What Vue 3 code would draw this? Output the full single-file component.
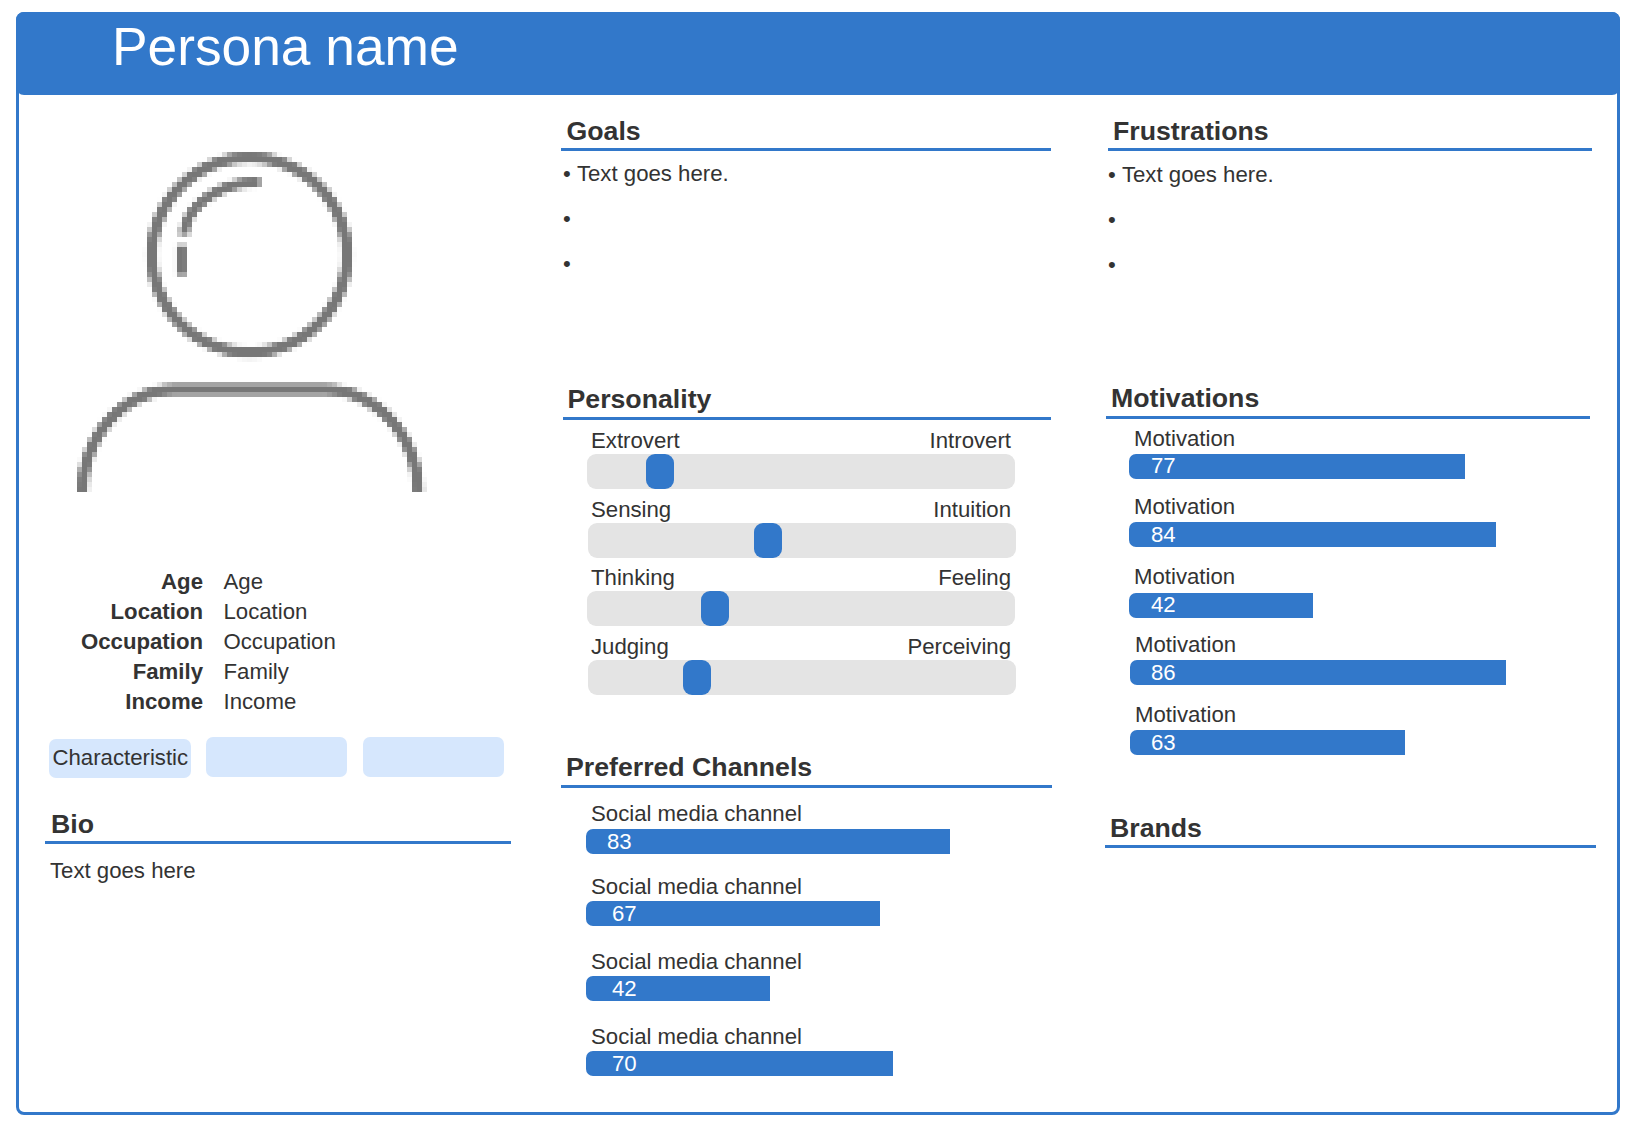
<script setup>
const facts = ['Age', 'Location', 'Occupation', 'Family', 'Income']
const sliders = [
  { left: 'Extrovert', right: 'Introvert', at: 59 },
  { left: 'Sensing', right: 'Intuition', at: 166 },
  { left: 'Thinking', right: 'Feeling', at: 114 },
  { left: 'Judging', right: 'Perceiving', at: 95 },
]
const channels = [
  { value: 83, width: 364 },
  { value: 67, width: 294 },
  { value: 42, width: 184 },
  { value: 70, width: 307 },
]
const motivations = [
  { value: 77, width: 336 },
  { value: 84, width: 367 },
  { value: 42, width: 184 },
  { value: 86, width: 376 },
  { value: 63, width: 275 },
]
</script>

<template>
  <div class="frame">
    <header class="banner">Persona name</header>
    <main class="columns">
      <section class="col col-left">
        <svg class="avatar" viewBox="45 95 466 472" fill="none" stroke="#777" aria-label="Persona avatar">
          <defs>
            <filter id="lowres" filterUnits="userSpaceOnUse" x="47" y="97" width="460" height="460" color-interpolation-filters="sRGB">
              <feGaussianBlur in="SourceGraphic" stdDeviation="1.3" result="soft" />
              <feFlood x="49" y="99" width="1" height="1" flood-color="#000" />
              <feComposite x="47" y="97" width="5" height="5" result="dot" />
              <feTile in="dot" result="grid" />
              <feComposite in="soft" in2="grid" operator="in" />
              <feMorphology operator="dilate" radius="2" />
            </filter>
          </defs>
          <g filter="url(#lowres)">
            <circle cx="249.5" cy="255" r="97.5" stroke-width="11" />
            <path d="M184 235 C186 205 220 182 260 182" stroke-width="10" />
            <path d="M181.5 245 V275" stroke-width="10" />
            <path d="M82.5 492 C82.5 435 125 389.5 175 389.5 H325 C375 389.5 418 435 418 492" stroke-width="11" />
          </g>
        </svg>
        <dl class="facts">
          <template v-for="fact in facts" :key="fact">
            <dt>{{ fact }}</dt>
            <dd>{{ fact }}</dd>
          </template>
        </dl>
        <div class="chips">
          <div class="chip">Characteristic</div>
          <div class="chip"></div>
          <div class="chip"></div>
        </div>
        <h2 class="head head-bio">Bio</h2>
        <p class="bio">Text goes here</p>
      </section>

      <section class="col col-mid">
        <h2 class="head head-goals">Goals</h2>
        <ul class="bullets bullets-goals">
          <li>Text goes here.</li>
          <li></li>
          <li></li>
        </ul>

        <h2 class="head head-personality">Personality</h2>
        <div class="sliders">
          <div v-for="s in sliders" :key="s.left" class="slider">
            <div class="slider-labels"><span>{{ s.left }}</span><span>{{ s.right }}</span></div>
            <div class="track"><div class="thumb" :style="{ left: s.at + 'px' }"></div></div>
          </div>
        </div>

        <h2 class="head head-channels">Preferred Channels</h2>
        <div class="bars bars-channels">
          <div v-for="c in channels" :key="c.value" class="bar-row">
            <div class="bar-label">Social media channel</div>
            <div class="bar" :style="{ width: c.width + 'px' }">{{ c.value }}</div>
          </div>
        </div>
      </section>

      <section class="col col-right">
        <h2 class="head head-frustrations">Frustrations</h2>
        <ul class="bullets bullets-frustrations">
          <li>Text goes here.</li>
          <li></li>
          <li></li>
        </ul>

        <h2 class="head head-motivations">Motivations</h2>
        <div class="bars bars-motivations">
          <div v-for="m in motivations" :key="m.value" class="bar-row">
            <div class="bar-label">Motivation</div>
            <div class="bar" :style="{ width: m.width + 'px' }">{{ m.value }}</div>
          </div>
        </div>

        <h2 class="head head-brands">Brands</h2>
      </section>
    </main>
  </div>
</template>

<style>
html, body { margin: 0; background: #fff; }
</style>

<style scoped>
.frame {
  box-sizing: border-box;
  width: 1604px;
  height: 1103px;
  margin: 12px 0 0 16px;
  border: 3px solid #3278ca;
  border-radius: 8px;
  font-family: "Liberation Sans", Arial, sans-serif;
  font-size: 22.2px;
  color: #333;
}
.banner {
  box-sizing: border-box;
  height: 83px;
  margin: -3px -3px 0;
  padding-left: 96px;
  border-radius: 8px;
  background: #3278ca;
  color: #fff;
  font-size: 53.3px;
  line-height: 70px;
}
.columns {
  display: flex;
  margin-left: 26px;
}
.col-left { width: 466px; margin-right: 50px; }
.col-mid { width: 491px; margin-right: 53px; padding-top: 19px; }
.col-right { width: 491px; padding-top: 19px; }

.head {
  box-sizing: border-box;
  height: 37px;
  margin: 0;
  padding-left: 5px;
  border-bottom: 3px solid #3278ca;
  font-size: 26.7px;
  font-weight: 700;
  line-height: 34px;
}
.head-goals { width: 490px; padding-left: 5.5px; }
.head-personality { width: 488px; margin: 97px 0 0 2px; padding-left: 4.5px; line-height: 32px; }
.head-channels { margin-top: 56px; line-height: 32px; }
.head-frustrations { width: 484px; margin-left: 3px; padding-left: 5px; }
.head-motivations { width: 484px; margin: 95px 0 0 1px; line-height: 32px; }
.head-brands { margin-top: 56px; }
.head-bio { margin-top: 29px; padding-left: 6px; }

.avatar { display: block; width: 466px; height: 472px; }

.facts {
  display: grid;
  grid-template-columns: 158px auto;
  column-gap: 20.5px;
  grid-auto-rows: 30px;
  margin: 0;
  line-height: 30px;
}
.facts dt { font-weight: 700; text-align: right; }
.facts dd { margin: 0; }

.chips {
  display: flex;
  align-items: flex-start;
  margin: 20px 0 0 4px;
}
.chip {
  box-sizing: border-box;
  width: 141px;
  height: 40px;
  border-radius: 7px;
  background: #d6e7fd;
  line-height: 40px;
  white-space: nowrap;
}
.chip:nth-child(1) {
  width: 142px;
  height: 39px;
  margin-top: 2px;
  padding-left: 3.5px;
  line-height: 38px;
}
.chip:nth-child(2) { margin-left: 15px; }
.chip:nth-child(3) { margin-left: 16px; }

.bio { margin: 14px 0 0 5px; line-height: 25px; }

.bullets {
  margin: 0;
  padding: 0;
  list-style: none;
  line-height: 45px;
}
.bullets li { height: 45px; }
.bullets li::before { content: "\2022\00a0"; }
.bullets-goals { margin-left: 2px; }
.bullets-frustrations { margin: 1px 0 0 3px; }

.sliders { margin-left: 26px; }
.slider { width: 428px; margin-top: 9px; }
.slider:nth-child(3) { margin-top: 8px; }
.slider:nth-child(2) .track { margin-left: 0.5px; }
.slider:nth-child(4) .track { margin-left: 1px; }
.slider-labels {
  display: flex;
  justify-content: space-between;
  height: 25px;
  padding: 0 4px;
  line-height: 24px;
}
.track {
  position: relative;
  width: 428px;
  height: 35px;
  border-radius: 9px;
  background: #e4e4e4;
}
.thumb {
  position: absolute;
  top: 0;
  width: 28px;
  height: 35px;
  border-radius: 9px;
  background: #3278ca;
}

.bars-channels { margin-left: 25px; }
.bars-motivations { margin-left: 24px; }
.bar-row { height: 52px; }
.bars-channels .bar-row { margin-top: 23px; }
.bars-channels .bar-row:nth-child(1) { margin-top: 14px; }
.bars-channels .bar-row:nth-child(2) { margin-top: 20px; }
.bars-motivations .bar-row:nth-child(1) { margin-top: 8px; }
.bars-motivations .bar-row:nth-child(2) { margin-top: 16px; }
.bars-motivations .bar-row:nth-child(3) { margin-top: 19px; }
.bars-motivations .bar-row:nth-child(4) { margin: 15px 0 0 1px; }
.bars-motivations .bar-row:nth-child(5) { margin: 18px 0 0 1px; }
.bar-label {
  height: 27px;
  padding-left: 5px;
  line-height: 25px;
  white-space: nowrap;
}
.bars-channels .bar-row:nth-child(1) .bar-label,
.bars-motivations .bar-label { line-height: 23px; }
.bars-motivations .bar-row:nth-child(3) .bar-label { line-height: 21px; }
.bar {
  box-sizing: border-box;
  height: 25px;
  padding-left: 26px;
  border-radius: 7px 0 0 7px;
  background: #3278ca;
  color: #fff;
  line-height: 25px;
}
.bars-channels .bar-row:nth-child(1) .bar { padding-left: 21px; }
.bars-motivations .bar { padding-left: 22px; }
.bars-motivations .bar-row:nth-child(n + 4) .bar { padding-left: 21px; }
.bars-motivations .bar-row:nth-child(1) .bar,
.bars-motivations .bar-row:nth-child(3) .bar { line-height: 23px; }
</style>
